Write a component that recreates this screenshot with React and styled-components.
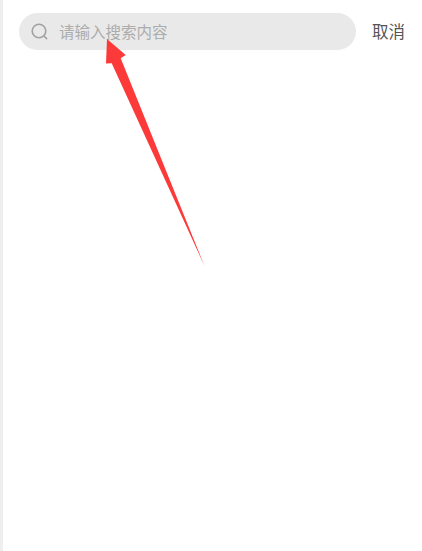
import React from "react";
import styled, { createGlobalStyle } from "styled-components";

const GlobalStyle = createGlobalStyle`
  html, body {
    margin: 0;
    padding: 0;
    background: #fff;
    overflow: hidden;
  }
`;

const Page = styled.div`
  position: relative;
  box-sizing: border-box;
  width: 422px;
  height: 551px;
  background: #fff;
  border-left: 3px solid #eeeeee;
  font-family: "Noto Sans CJK SC", "Liberation Sans", sans-serif;
`;

const Header = styled.div`
  display: flex;
  align-items: center;
  padding: 13px 16px 0 16px;
`;

const SearchBar = styled.div`
  display: flex;
  align-items: center;
  gap: 10px;
  box-sizing: border-box;
  width: 337px;
  height: 37px;
  padding-left: 11px;
  border-radius: 18.5px;
  background: #e9e9e9;
`;

const SearchText = styled.span`
  font-size: 15.5px;
  line-height: 37px;
  color: #acacac;
`;

const CancelButton = styled.span`
  margin-left: 16px;
  font-size: 16.5px;
  line-height: 37px;
  color: #555555;
`;

const Arrow = styled.svg`
  position: absolute;
  left: -3px;
  top: 0;
  pointer-events: none;
`;

function SearchIcon() {
  return (
    <svg width="19" height="19" viewBox="0 0 19 19" fill="none" stroke="#a2a2a2" strokeWidth="1.6" strokeLinecap="round">
      <circle cx="9" cy="9" r="6.8" />
      <path d="M14 14l2.6 2.6" />
    </svg>
  );
}

export default function App() {
  return (
    <Page>
      <GlobalStyle />
      <Header>
        <SearchBar>
          <SearchIcon />
          <SearchText>请输入搜索内容</SearchText>
        </SearchBar>
        <CancelButton>取消</CancelButton>
      </Header>
      <Arrow width="422" height="551" viewBox="0 0 422 551">
        <polygon points="107,39 125.7,55 120.7,58.3 204.5,266 111.7,63.3 106,63.5" fill="#fd3a3a" />
      </Arrow>
    </Page>
  );
}
